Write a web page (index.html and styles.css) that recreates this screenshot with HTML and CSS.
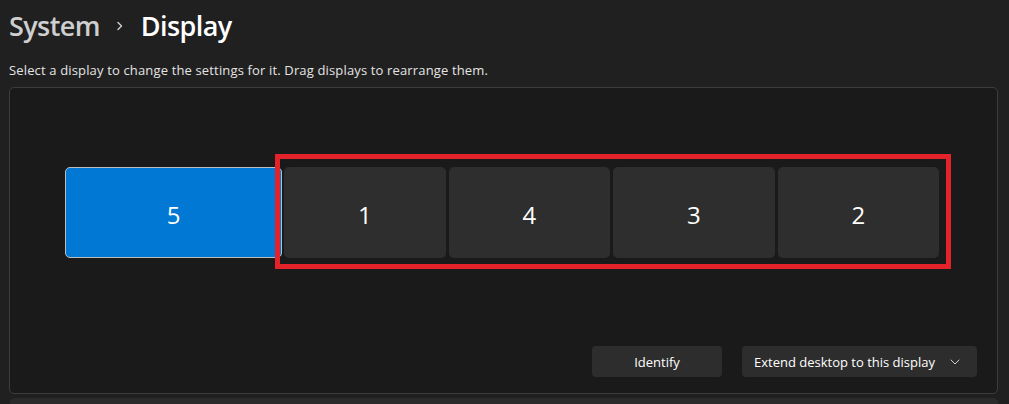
FILE: index.html
```html
<!DOCTYPE html>
<html lang="en">
<head>
<meta charset="utf-8">
<title>Display</title>
<link rel="stylesheet" href="styles.css">
</head>
<body>
<header class="crumbs">
  <span class="crumb-parent">System</span>
  <svg class="crumb-sep" width="8" height="10" viewBox="0 0 8 10"><path d="M2 1.5 L5.5 5 L2 8.5" fill="none" stroke="#cfcfcf" stroke-width="1.4" stroke-linecap="round" stroke-linejoin="round"/></svg>
  <span class="crumb-current">Display</span>
</header>
<p class="hint">Select a display to change the settings for it. Drag displays to rearrange them.</p>
<section class="arrange">
  <div class="canvas">
    <div class="monitors">
      <div class="mon mon-selected">5</div>
      <div class="mon">1</div>
      <div class="mon">4</div>
      <div class="mon">3</div>
      <div class="mon">2</div>
    </div>
    <div class="highlight"></div>
  </div>
  <div class="actions">
    <button class="btn btn-identify">Identify</button>
    <button class="btn btn-select">Extend desktop to this display
      <svg width="10" height="6" viewBox="0 0 10 6"><path d="M1 1 L5 5 L9 1" fill="none" stroke="#cfcfcf" stroke-width="1" stroke-linecap="round" stroke-linejoin="round"/></svg>
    </button>
  </div>
</section>
<div class="next-card"></div>
</body>
</html>
```
FILE: styles.css
```css
html, body {
  margin: 0;
  padding: 0;
  background: #202020;
  color: #ffffff;
  font-family: "Open Sans", "Noto Sans", sans-serif;
  overflow: hidden;
}
body {
  width: 1009px;
  height: 404px;
  padding: 0 11px 0 9px;
  box-sizing: border-box;
}
.crumbs {
  display: flex;
  align-items: center;
  height: 50px;
  font-size: 27px;
  font-weight: 600;
  letter-spacing: -0.6px;
}
.crumb-parent { color: #cfcfcf; }
.crumb-sep { margin: 2px 17px 0 16px; }
.crumb-current { color: #ffffff; }
.hint {
  margin: 11px 0 0 0;
  font-size: 13px;
  line-height: 18px;
  color: #e4e4e4;
  letter-spacing: 0.15px;
}
.arrange {
  margin-top: 8px;
  height: 307px;
  box-sizing: border-box;
  border: 1px solid #3c3c3c;
  border-radius: 5px;
  background: #1a1a1a;
  display: flex;
  flex-direction: column;
}
.canvas {
  position: relative;
  height: 246px;
}
.monitors {
  display: flex;
  gap: 3px;
  padding: 79px 0 0 55px;
}
.mon {
  width: 161.5px;
  height: 91px;
  background: #2e2e2e;
  border-radius: 5px;
  display: flex;
  align-items: center;
  justify-content: center;
  font-size: 24px;
  color: #ffffff;
  padding-top: 3px;
  box-sizing: border-box;
}
.mon-selected {
  width: 217px;
  background: #0078d4;
  border: 1px solid #bdbdbd;
  margin-right: -1px;
}
.highlight {
  position: absolute;
  left: 265px;
  top: 66px;
  width: 676px;
  height: 115px;
  box-sizing: border-box;
  border: 5px solid #e3222a;
}
.actions {
  display: flex;
  justify-content: flex-end;
  gap: 20px;
  padding: 12px 20px 0 0;
}
.btn {
  height: 31px;
  border: none;
  border-radius: 4px;
  background: #2d2d2d;
  color: #ffffff;
  font-family: "Open Sans", "Noto Sans", sans-serif;
  font-size: 13px;
  display: flex;
  align-items: center;
  justify-content: center;
  padding: 0;
}
.btn-identify { width: 130px; }
.btn-select {
  width: 235px;
  justify-content: flex-start;
  padding-left: 12px;
  gap: 15px;
}
.next-card {
  margin: 4px 0 0 1px;
  height: 20px;
  background: #2b2b2b;
  border-radius: 5px 5px 0 0;
}
```
